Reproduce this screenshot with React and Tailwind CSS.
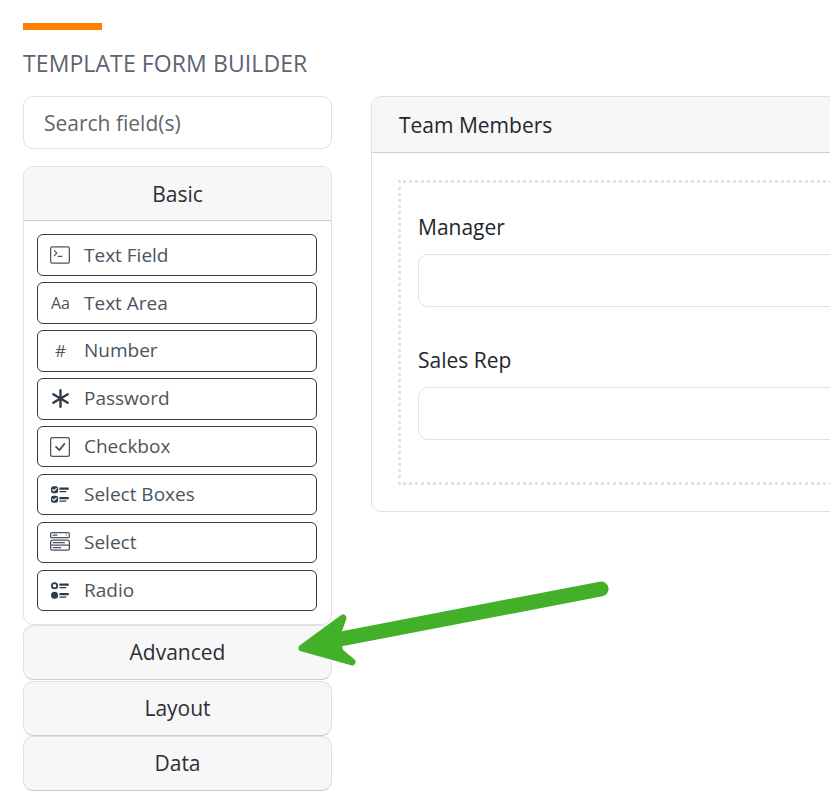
import { BsTerminal, BsAsterisk, BsCheckSquare, BsUiChecks, BsMenuButtonWide, BsUiRadios } from "react-icons/bs";

const fields = [
  { label: "Text Field", icon: <BsTerminal className="text-[20px]" /> },
  { label: "Text Area", icon: <span className="pl-px text-[16px]">Aa</span> },
  { label: "Number", icon: <span className="pl-px text-[17px]">#</span> },
  { label: "Password", icon: <BsAsterisk className="text-[19px] text-[#2f3b46]" /> },
  { label: "Checkbox", icon: <BsCheckSquare className="text-[20px]" /> },
  { label: "Select Boxes", icon: <BsUiChecks className="text-[19px] text-[#2f3b46]" /> },
  { label: "Select", icon: <BsMenuButtonWide className="text-[20px]" /> },
  { label: "Radio", icon: <BsUiRadios className="text-[19px] text-[#2f3b46]" /> },
];

const Collapsed = ({ label, className }) => (
  <div
    className={`flex h-[55px] items-center justify-center rounded-[10px] border border-[#dfdfe4] border-b-[#c9c9ce] bg-[#f7f7f8] pt-px text-[21px] text-[#2c2f36] ${className}`}
  >
    {label}
  </div>
);

const FormField = ({ label, className }) => (
  <div className={className}>
    <div className="h-[27px] text-[21px] leading-[27px] text-[#23262b]">{label}</div>
    <div className="mt-[13px] h-[53px] rounded-[10px] border border-[#e0e0e6] bg-white" />
  </div>
);

const App = () => {
  return (
    <div className="relative h-[810px] w-[830px] overflow-hidden bg-white font-['Open_Sans',sans-serif]">
      <div className="flex gap-[39px] pl-[23px] pt-[23px]">
        <div className="w-[309px] shrink-0">
          <div className="h-[7px] w-[79px] bg-[#ff8000]" />
          <h1 className="mt-[18px] h-[30px] text-[23px] leading-[30px] tracking-[0.1px] text-[#5b6470]">TEMPLATE FORM BUILDER</h1>
          <div className="mt-[18px] flex h-[53px] items-center rounded-[10px] border border-[#e0e0e6] pl-[20px] pt-[2px] text-[21px] text-[#62666b]">
            Search field(s)
          </div>

          <div className="mt-[17px] h-[459px] rounded-[10px] border border-[#e0e0e6]">
            <div className="flex h-[54px] items-center justify-center rounded-t-[10px] border-b border-[#cfcfd3] bg-[#f7f7f8] pt-[2px] text-[21px] text-[#2c2f36]">
              Basic
            </div>
            <div className="flex flex-col gap-[6.25px] pl-[13px] pr-[14px] pt-[13px]">
              {fields.map((f) => (
                <div
                  key={f.label}
                  className="flex h-[41.7px] items-center rounded-[6px] border border-[#2f3b46] text-[#4a5560]"
                >
                  <span className="flex w-[46px] shrink-0 justify-center pr-[2px]">{f.icon}</span>
                  <span className="text-[19px]">{f.label}</span>
                </div>
              ))}
            </div>
          </div>

          <Collapsed label="Advanced" />
          <Collapsed label="Layout" className="mt-px" />
          <Collapsed label="Data" />
        </div>

        <div className="mt-[73px] h-[416px] w-[600px] shrink-0 rounded-[10px] border border-[#e0e0e6]">
          <div className="flex h-[56px] items-center rounded-t-[10px] border-b border-[#cfcfd3] bg-[#f7f7f8] pl-[27px] pt-[2px] text-[21px] text-[#23262b]">
            Team Members
          </div>
          <div className="ml-[26px] mt-[27px] h-[305px] border-[3px] border-dotted border-[#e3e3e3] px-[17px] pt-[31px]">
            <FormField label="Manager" />
            <FormField label="Sales Rep" className="mt-[40px]" />
          </div>
        </div>
      </div>

      {/* annotation arrow */}
      <svg className="absolute left-0 top-0" width="830" height="810" viewBox="0 0 830 810">
        <path d="M601 589L325 642" stroke="#43b02a" strokeWidth="15" strokeLinecap="round" />
        <path
          d="M302 648L343 618L336 637L340 652L352 662Z"
          fill="#43b02a"
          stroke="#43b02a"
          strokeWidth="7"
          strokeLinejoin="round"
        />
      </svg>
    </div>
  );
};

export default App;
